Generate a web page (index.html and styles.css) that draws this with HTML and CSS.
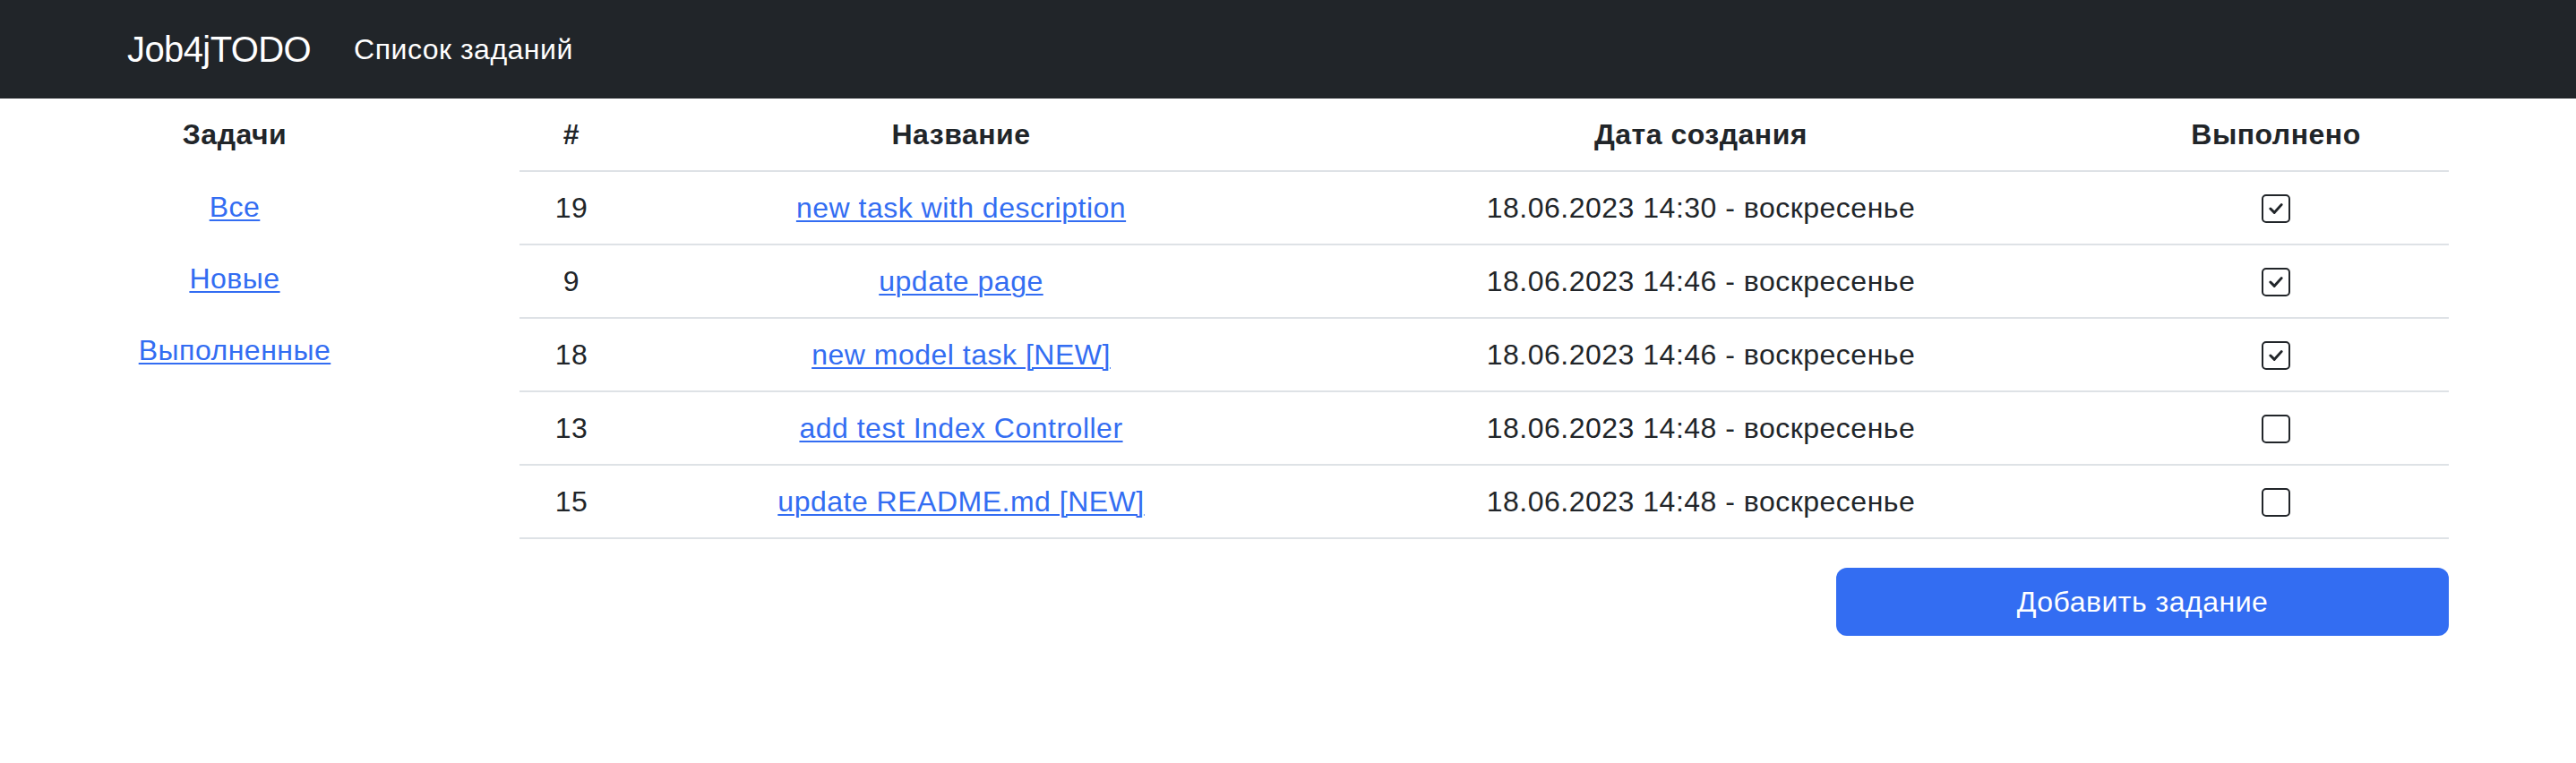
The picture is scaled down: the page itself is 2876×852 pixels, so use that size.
FILE: index.html
```html
<!DOCTYPE html>
<html lang="ru">
<head>
<meta charset="utf-8">
<title>Список заданий</title>
<link rel="stylesheet" href="styles.css">
</head>
<body>
<nav class="navbar">
  <div class="container nav-inner">
    <a class="brand" href="#">Job4jTODO</a>
    <a class="nav-link" href="#">Список заданий</a>
  </div>
</nav>
<div class="container layout">
  <aside class="sidebar">
    <div class="side-head">Задачи</div>
    <a class="side-link" href="#">Все</a>
    <a class="side-link" href="#">Новые</a>
    <a class="side-link" href="#">Выполненные</a>
  </aside>
  <main class="main">
    <table class="tasks">
      <thead>
        <tr><th class="c-id">#</th><th class="c-name">Название</th><th class="c-date">Дата создания</th><th class="c-done">Выполнено</th></tr>
      </thead>
      <tbody>
        <tr><td>19</td><td><a href="#">new task with description</a></td><td>18.06.2023 14:30 - воскресенье</td><td><span class="check on"><svg viewBox="0 0 32 32"><polyline points="9,16 14,21 23,11"/></svg></span></td></tr>
        <tr><td>9</td><td><a href="#">update page</a></td><td>18.06.2023 14:46 - воскресенье</td><td><span class="check on"><svg viewBox="0 0 32 32"><polyline points="9,16 14,21 23,11"/></svg></span></td></tr>
        <tr><td>18</td><td><a href="#">new model task [NEW]</a></td><td>18.06.2023 14:46 - воскресенье</td><td><span class="check on"><svg viewBox="0 0 32 32"><polyline points="9,16 14,21 23,11"/></svg></span></td></tr>
        <tr><td>13</td><td><a href="#">add test Index Controller</a></td><td>18.06.2023 14:48 - воскресенье</td><td><span class="check"></span></td></tr>
        <tr><td>15</td><td><a href="#">update README.md [NEW]</a></td><td>18.06.2023 14:48 - воскресенье</td><td><span class="check"></span></td></tr>
      </tbody>
    </table>
    <div class="actions">
      <button class="btn-primary" type="button">Добавить задание</button>
    </div>
  </main>
</div>
</body>
</html>
```
FILE: styles.css
```css
* { box-sizing: border-box; }
html, body { margin: 0; padding: 0; }
body {
  font-family: "Liberation Sans", Arial, sans-serif;
  font-size: 32px;
  line-height: 48px;
  letter-spacing: 0.5px;
  color: #212529;
  background: #fff;
}
a { color: #336df2; text-decoration: underline; text-decoration-thickness: 2px; text-underline-offset: 3px; }
.container {
  max-width: 2640px;
  margin: 0 auto;
  padding: 0 24px;
}
.navbar {
  background: #212529;
  height: 110px;
}
.nav-inner {
  height: 100%;
  display: flex;
  align-items: center;
}
.brand {
  color: #fff;
  font-size: 40px;
  letter-spacing: -0.6px;
  text-decoration: none;
  margin-right: 32px;
}
.nav-link {
  color: #fff;
  text-decoration: none;
  padding: 0 16px;
}
.layout {
  display: flex;
  gap: 198px;
}
.sidebar {
  width: 240px;
  flex: none;
  display: flex;
  flex-direction: column;
  align-items: center;
}
.side-head {
  font-weight: bold;
  height: 81px;
  line-height: 80px;
}
.side-link {
  line-height: 80px;
  height: 80px;
}
.main {
  flex: 1;
}
.tasks {
  width: 100%;
  border-collapse: collapse;
  text-align: center;
}
.tasks th, .tasks td {
  padding: 16px;
  border-bottom: 2px solid #dee2e6;
  vertical-align: middle;
}
.tasks th { font-weight: bold; }
.c-id { width: 116px; }
.c-name { width: 754px; }
.c-date { width: 898px; }
.c-done { width: 386px; }
.check {
  display: inline-block;
  width: 32px;
  height: 32px;
  border: 2px solid #212529;
  border-radius: 5px;
  vertical-align: middle;
  position: relative;
  top: -2px;
}
.check svg {
  display: block;
  width: 28px;
  height: 28px;
  fill: none;
  stroke: #212529;
  stroke-width: 3.4;
  stroke-linecap: round;
  stroke-linejoin: round;
}
.actions {
  display: flex;
  justify-content: flex-end;
  margin-top: 32px;
}
.btn-primary {
  width: 684px;
  height: 76px;
  background: #336df2;
  color: #fff;
  border: none;
  border-radius: 12px;
  font-family: inherit;
  font-size: 32px;
  letter-spacing: 0.5px;
}
```
